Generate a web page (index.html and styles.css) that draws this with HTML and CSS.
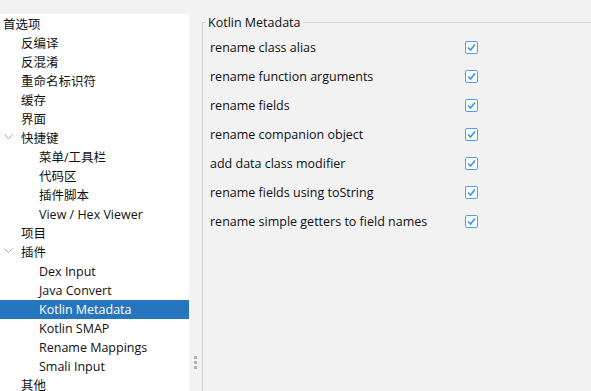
FILE: index.html
```html
<!DOCTYPE html>
<html lang="zh-CN">
<head>
  <meta charset="UTF-8">
  <title>首选项 - Kotlin Metadata</title>
  <link rel="stylesheet" href="styles.css">
</head>
<body>
  <div class="window">
    <div class="sidebar">
      <div class="node level0">首选项</div>
      <div class="node level1">反编译</div>
      <div class="node level1">反混淆</div>
      <div class="node level1">重命名标识符</div>
      <div class="node level1">缓存</div>
      <div class="node level1">界面</div>
      <div class="node level1">
        <svg class="chevron" width="9" height="5" viewBox="0 0 9 5"><path d="M0.5 0.5 L4.5 4.5 L8.5 0.5" fill="none" stroke="#a8a8a8" stroke-width="1"/></svg>
        快捷键
      </div>
      <div class="node level2">菜单/工具栏</div>
      <div class="node level2">代码区</div>
      <div class="node level2">插件脚本</div>
      <div class="node level2">View / Hex Viewer</div>
      <div class="node level1">项目</div>
      <div class="node level1">
        <svg class="chevron" width="9" height="5" viewBox="0 0 9 5"><path d="M0.5 0.5 L4.5 4.5 L8.5 0.5" fill="none" stroke="#a8a8a8" stroke-width="1"/></svg>
        插件
      </div>
      <div class="node level2">Dex Input</div>
      <div class="node level2">Java Convert</div>
      <div class="node level2 selected">Kotlin Metadata</div>
      <div class="node level2">Kotlin SMAP</div>
      <div class="node level2">Rename Mappings</div>
      <div class="node level2">Smali Input</div>
      <div class="node level1">其他</div>
    </div>

    <div class="splitter">
      <span class="grip"></span>
      <span class="grip"></span>
      <span class="grip"></span>
    </div>

    <fieldset class="group">
      <legend>Kotlin Metadata</legend>
      <div class="option"><span>rename class alias</span><span class="check"><svg width="11" height="11" viewBox="0 0 11 11"><path d="M2 5.5 L4.5 8 L9 2.5" fill="none" stroke="#3f95ea" stroke-width="1.7"/></svg></span></div>
      <div class="option"><span>rename function arguments</span><span class="check"><svg width="11" height="11" viewBox="0 0 11 11"><path d="M2 5.5 L4.5 8 L9 2.5" fill="none" stroke="#3f95ea" stroke-width="1.7"/></svg></span></div>
      <div class="option"><span>rename fields</span><span class="check"><svg width="11" height="11" viewBox="0 0 11 11"><path d="M2 5.5 L4.5 8 L9 2.5" fill="none" stroke="#3f95ea" stroke-width="1.7"/></svg></span></div>
      <div class="option"><span>rename companion object</span><span class="check"><svg width="11" height="11" viewBox="0 0 11 11"><path d="M2 5.5 L4.5 8 L9 2.5" fill="none" stroke="#3f95ea" stroke-width="1.7"/></svg></span></div>
      <div class="option"><span>add data class modifier</span><span class="check"><svg width="11" height="11" viewBox="0 0 11 11"><path d="M2 5.5 L4.5 8 L9 2.5" fill="none" stroke="#3f95ea" stroke-width="1.7"/></svg></span></div>
      <div class="option"><span>rename fields using toString</span><span class="check"><svg width="11" height="11" viewBox="0 0 11 11"><path d="M2 5.5 L4.5 8 L9 2.5" fill="none" stroke="#3f95ea" stroke-width="1.7"/></svg></span></div>
      <div class="option"><span>rename simple getters to field names</span><span class="check"><svg width="11" height="11" viewBox="0 0 11 11"><path d="M2 5.5 L4.5 8 L9 2.5" fill="none" stroke="#3f95ea" stroke-width="1.7"/></svg></span></div>
    </fieldset>
  </div>
</body>
</html>
```

FILE: styles.css
```css
html, body {
  margin: 0;
  height: 100%;
  overflow: hidden;
}
body {
  font-family: "Open Sans", "Noto Sans CJK SC", sans-serif;
  font-size: 12.5px;
  color: #111;
  background-color: #f2f2f2;
}
.window {
  display: flex;
  height: 391px;
}
.sidebar {
  width: 189px;
  margin-top: 14px;
  padding-top: 1px;
  background-color: #fff;
  display: flex;
  flex-direction: column;
}
.node {
  position: relative;
  height: 19px;
  line-height: 19px;
  white-space: nowrap;
  flex-shrink: 0;
}
.level0 {
  padding-left: 3px;
}
.level1 {
  padding-left: 21px;
}
.level2 {
  padding-left: 39px;
}
.selected {
  background-color: #2675bf;
  color: #fff;
}
.chevron {
  position: absolute;
  left: 4px;
  top: 5px;
}
.splitter {
  width: 13px;
  display: flex;
  flex-direction: column;
  align-items: center;
  gap: 2px;
  padding-top: 356px;
  box-sizing: border-box;
}
.grip {
  width: 3px;
  height: 3px;
  background-color: #b4b4b4;
}
.group {
  flex: 1;
  margin: 14px 0 0 0;
  padding: 2px 0 0 3px;
  border: none;
  border-top: 1px solid #d2d2d2;
  border-left: 1px solid #d2d2d2;
  min-width: 0;
}
.group legend {
  padding: 0 2px;
  line-height: 17px;
}
.option {
  display: flex;
  align-items: center;
  height: 29px;
  padding-left: 4px;
  width: 268px;
  justify-content: space-between;
}
.check {
  width: 11px;
  height: 11px;
  border: 1px solid #4d9ff0;
  border-radius: 2px;
  background-color: #fff;
  display: flex;
}
```
